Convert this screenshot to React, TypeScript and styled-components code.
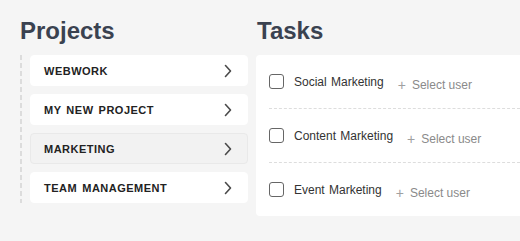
import React from "react";
import styled, { createGlobalStyle } from "styled-components";

const GlobalStyle = createGlobalStyle`
  html, body {
    margin: 0;
    padding: 0;
    background: #f5f5f5;
    overflow: hidden;
    font-family: "Liberation Sans", Arial, sans-serif;
  }
`;

const Page = styled.div`
  display: flex;
  align-items: flex-start;
  gap: 8px;
  padding: 19px 0 0 20px;
  width: 520px;
  box-sizing: border-box;
`;

const Column = styled.section<{ $grow?: boolean }>`
  display: flex;
  flex-direction: column;
  gap: 12px;
  flex: ${(p) => (p.$grow ? "1" : "none")};
`;

const Heading = styled.h2<{ $indent?: number }>`
  margin: 0;
  font-size: 24px;
  line-height: 24px;
  font-weight: 700;
  color: #3a4250;
  padding-left: ${(p) => p.$indent ?? 0}px;
`;

const ProjectList = styled.div`
  display: flex;
  flex-direction: column;
  gap: 8px;
  width: 218px;
  padding-left: 10px;
  background-image: linear-gradient(#dcdcdc 62%, transparent 0);
  background-size: 2px 8px;
  background-repeat: repeat-y;
  background-position: 0 0;
`;

const ProjectCard = styled.div<{ $active?: boolean }>`
  box-sizing: border-box;
  height: 31px;
  display: flex;
  align-items: center;
  justify-content: space-between;
  padding: 0 15px 0 13px;
  border-radius: 4px;
  background: ${(p) => (p.$active ? "#f2f2f2" : "#ffffff")};
  border: 1px solid ${(p) => (p.$active ? "#e9e9e9" : "#ffffff")};
`;

const ProjectName = styled.span`
  font-size: 11px;
  font-weight: 700;
  letter-spacing: 0.5px;
  word-spacing: 1.5px;
  color: #222;
  text-transform: uppercase;
`;

const Chevron = () => (
  <svg width="8" height="14" viewBox="0 0 8 14" fill="none">
    <polyline
      points="1.5,1.5 6.5,7 1.5,12.5"
      stroke="#4a4a4a"
      strokeWidth="1.6"
      strokeLinecap="round"
      strokeLinejoin="round"
    />
  </svg>
);

const TaskPanel = styled.div`
  background: #fff;
  border-radius: 4px 0 0 4px;
  padding: 0 0 0 13px;
  box-sizing: border-box;
`;

const TaskRow = styled.div`
  display: flex;
  align-items: center;
  height: 17px;
  padding: 18px 0;
  border-bottom: 1px dashed #dddddd;
  &:last-child {
    border-bottom: none;
  }
`;

const Checkbox = styled.span`
  box-sizing: border-box;
  width: 15px;
  height: 15px;
  border: 1px solid #666;
  border-radius: 3px;
  margin-right: 10px;
  flex: none;
`;

const TaskName = styled.span`
  font-size: 12px;
  color: #333;
  word-spacing: 1px;
`;

const SelectUser = styled.span`
  display: flex;
  align-items: center;
  gap: 6px;
  margin-left: 14px;
  margin-top: 6px;
  font-size: 12px;
  color: #8a8a8a;
`;

const Plus = styled.span`
  font-size: 14px;
  font-weight: 300;
  color: #a0a0a0;
`;

const projects = [
  { name: "Webwork" },
  { name: "My new project" },
  { name: "Marketing", active: true },
  { name: "Team management" },
];

const tasks = ["Social Marketing", "Content Marketing", "Event Marketing"];

export default function App() {
  return (
    <>
      <GlobalStyle />
      <Page>
        <Column>
          <Heading>Projects</Heading>
          <ProjectList>
            {projects.map((p) => (
              <ProjectCard key={p.name} $active={p.active}>
                <ProjectName>{p.name}</ProjectName>
                <Chevron />
              </ProjectCard>
            ))}
          </ProjectList>
        </Column>
        <Column $grow>
          <Heading $indent={1}>Tasks</Heading>
          <TaskPanel>
            {tasks.map((t) => (
              <TaskRow key={t}>
                <Checkbox />
                <TaskName>{t}</TaskName>
                <SelectUser>
                  <Plus>+</Plus>
                  Select user
                </SelectUser>
              </TaskRow>
            ))}
          </TaskPanel>
        </Column>
      </Page>
    </>
  );
}
